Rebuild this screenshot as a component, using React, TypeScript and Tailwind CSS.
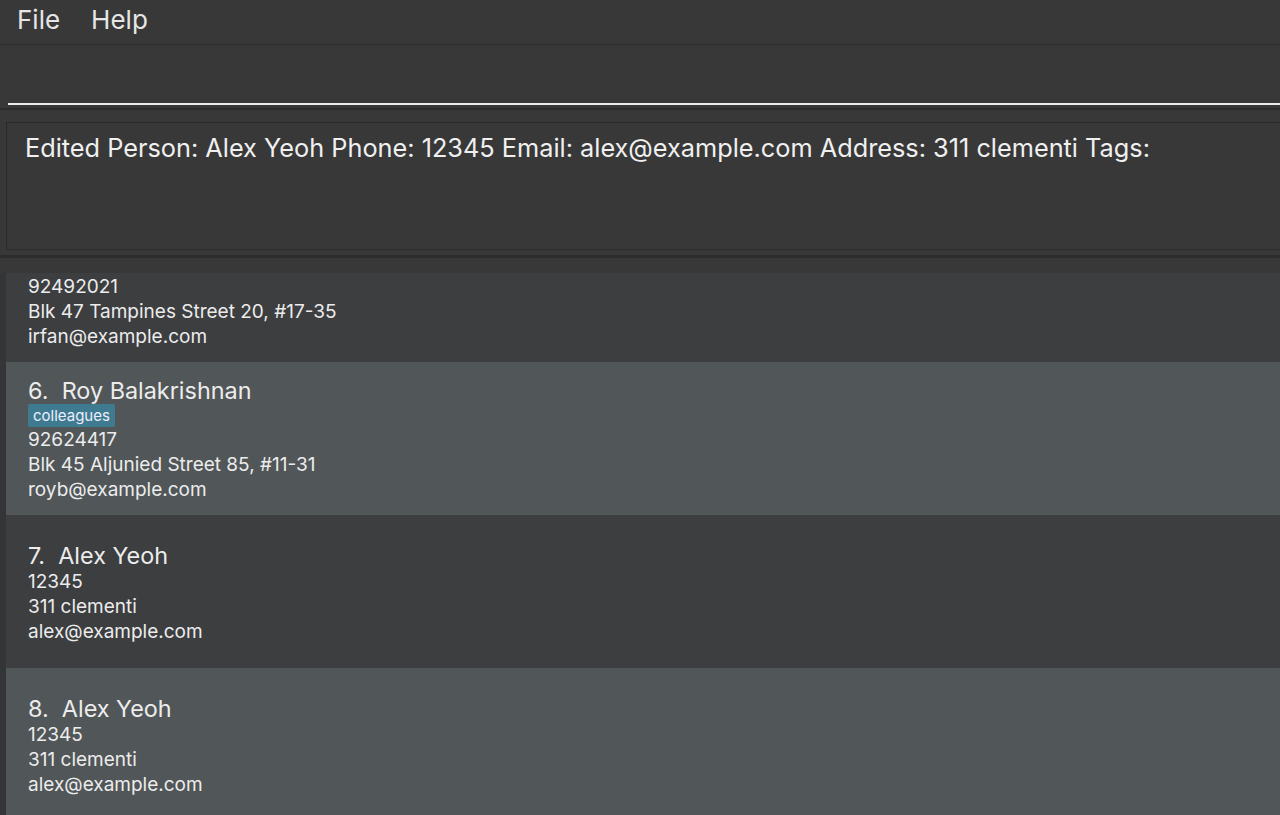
import React from "react";

const people = [
  { n: 5, name: "Irfan Ibrahim", tags: ["classmates"], phone: "92492021", address: "Blk 47 Tampines Street 20, #17-35", email: "irfan@example.com" },
  { n: 6, name: "Roy Balakrishnan", tags: ["colleagues"], phone: "92624417", address: "Blk 45 Aljunied Street 85, #11-31", email: "royb@example.com" },
  { n: 7, name: "Alex Yeoh", tags: [], phone: "12345", address: "311 clementi", email: "alex@example.com" },
  { n: 8, name: "Alex Yeoh", tags: [], phone: "12345", address: "311 clementi", email: "alex@example.com" },
];

function PersonCard({ p, odd, clipped }: { p: any; odd: boolean; clipped?: boolean }) {
  return (
    <div
      className={`h-[153px] shrink-0 flex flex-col justify-center pl-[22px] pt-[3px] ${
        odd ? "bg-[#515658]" : "bg-[#3c3e40]"
      }`}
    >
      <div className={`text-[23.4px] leading-[26px] text-[#ececec] whitespace-pre ${clipped ? "invisible" : ""}`}>
        {p.n}.  {p.name}
      </div>
      {p.tags.length > 0 && (
        <div className={`flex gap-1 ${clipped ? "invisible" : ""}`}>
          {p.tags.map((t: string) => (
            <span
              key={t}
              className="bg-[#3e7b91] text-[#eef] text-[15px] leading-[23px] px-[5px] rounded-[2px]"
            >
              {t}
            </span>
          ))}
        </div>
      )}
      <div className="text-[19px] leading-[25px] text-[#ececec]">{p.phone}</div>
      <div className="text-[19px] leading-[25px] text-[#ececec]">{p.address}</div>
      <div className="text-[19px] leading-[25px] text-[#ececec]">{p.email}</div>
    </div>
  );
}

export default function App() {
  return (
    <div
      className="h-[815px] w-[1280px] overflow-hidden bg-[#383838] flex flex-col"
      style={{ fontFamily: "Inter, 'Liberation Sans', sans-serif" }}
    >
      {/* menu bar */}
      <div className="h-[45px] shrink-0 flex items-center pb-[5px] border-b border-[#2c2c2c] text-[26px] text-[#e6e6e6] pl-[17px] gap-[31px]">
        <span>File</span>
        <span>Help</span>
      </div>

      {/* command box */}
      <div className="h-[60px] shrink-0 pl-[8px]">
        <div className="h-full border-b-2 border-[#ececec]" />
      </div>
      <div className="h-[8px] shrink-0 flex flex-col justify-center">
        <div className="h-[2px] bg-[#2c2c2c]" />
      </div>

      {/* result box */}
      <div className="shrink-0 pl-[6px] pt-[9px]">
        <div className="h-[128px] border border-r-0 border-[#2a2a2a] pl-[18px] pt-[9px]">
          <div className="text-[25.3px] text-[#f0f0f0] leading-[32px] whitespace-nowrap">
            Edited Person: Alex Yeoh Phone: 12345 Email: alex@example.com Address: 311 clementi Tags:
          </div>
        </div>
      </div>
      <div className="h-[12px] shrink-0 flex flex-col justify-center">
        <div className="h-[3px] bg-[#2c2c2c]" />
      </div>

      {/* person list, scrolled part-way down */}
      <div className="flex-1 overflow-hidden mt-[11px] bg-[#343537] pl-[6px]">
        <div className="-mt-[64px] flex flex-col">
          {people.map((p, i) => (
            <PersonCard key={p.n + "-" + i} p={p} odd={i % 2 === 1} clipped={i === 0} />
          ))}
        </div>
      </div>
    </div>
  );
}
